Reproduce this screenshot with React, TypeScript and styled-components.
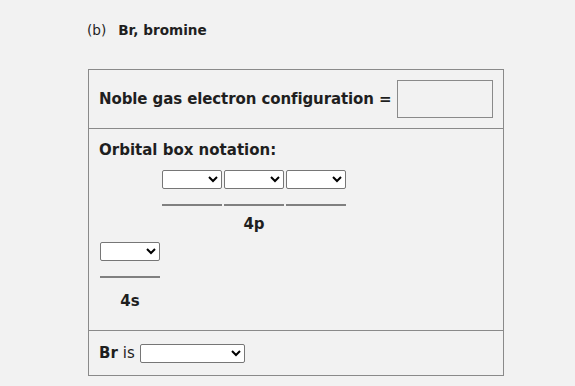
import React from "react";
import styled, { createGlobalStyle } from "styled-components";

const Global = createGlobalStyle`
  html, body { margin: 0; padding: 0; background: #f2f2f2; }
  body { font-family: "DejaVu Sans", Verdana, sans-serif; color: #1f1f1f; }
`;

const Page = styled.div`
  padding: 21px 0 0 87px;
`;

const Heading = styled.div`
  font-size: 13.6px;
  line-height: 18px;
  display: flex;
  gap: 12px;
`;

const Bold = styled.span`
  font-weight: bold;
`;

const Card = styled.div`
  margin-top: 30px;
  margin-left: 1px;
  width: 414px;
  border: 1px solid #8a8a8a;
`;

const Row = styled.div<{ $h: number; $top?: boolean }>`
  height: ${(p) => p.$h}px;
  padding: 0 10px;
  border-top: ${(p) => (p.$top ? "1px solid #8a8a8a" : "none")};
  box-sizing: border-box;
`;

const InlineRow = styled(Row)`
  display: flex;
  align-items: center;
`;

const Label = styled.span<{ $tight?: boolean }>`
  font-size: 15px;
  font-weight: bold;
  white-space: nowrap;
  flex-shrink: 0;
  letter-spacing: ${(p) => (p.$tight ? "-0.1px" : "0")};
`;

const Plain = styled.span`
  font-size: 15px;
  margin: 0 5px 0 5px;
`;

const AnswerBox = styled.div`
  width: 94px;
  height: 36px;
  border: 1px solid #8a8a8a;
  margin-left: 6px;
  flex-shrink: 0;
`;

const NotationRow = styled(Row)`
  padding-top: 12px;
  display: flex;
  flex-direction: column;
`;

const Level = styled.div<{ $ml: number; $mt: number }>`
  margin-left: ${(p) => p.$ml}px;
  margin-top: ${(p) => p.$mt}px;
  display: flex;
  flex-direction: column;
  align-items: center;
  align-self: flex-start;
`;

const Boxes = styled.div`
  display: flex;
  gap: 2px;
`;

const Lines = styled.div`
  display: flex;
  gap: 2px;
  margin-top: 15px;
`;

const Line = styled.div`
  width: 60px;
  height: 2px;
  background: #808080;
`;

const Sub = styled.div<{ $mt: number }>`
  margin-top: ${(p) => p.$mt}px;
  font-size: 15px;
  font-weight: bold;
  line-height: 18px;
`;

const Select = styled.select<{ $w: number }>`
  width: ${(p) => p.$w}px;
  height: 19px;
  box-sizing: border-box;
  border: 1px solid #767676;
  border-radius: 2px;
  background: #fff;
  font-size: 12px;
  padding: 0;
  margin: 0;
`;

export default function App() {
  return (
    <>
      <Global />
      <Page>
        <Heading>
          <span>(b)</span>
          <Bold>Br, bromine</Bold>
        </Heading>
        <Card>
          <InlineRow $h={58}>
            <Label $tight>Noble gas electron configuration =</Label>
            <AnswerBox />
          </InlineRow>
          <NotationRow $h={202} $top>
            <Label>Orbital box notation:</Label>
            <Level $ml={63} $mt={11}>
              <Boxes>
                <Select $w={60}><option></option></Select>
                <Select $w={60}><option></option></Select>
                <Select $w={60}><option></option></Select>
              </Boxes>
              <Lines>
                <Line />
                <Line />
                <Line />
              </Lines>
              <Sub $mt={9}>4p</Sub>
            </Level>
            <Level $ml={1} $mt={9}>
              <Boxes>
                <Select $w={60}><option></option></Select>
              </Boxes>
              <Lines>
                <Line />
              </Lines>
              <Sub $mt={14}>4s</Sub>
            </Level>
          </NotationRow>
          <InlineRow $h={45} $top>
            <Label>Br</Label>
            <Plain>is</Plain>
            <Select $w={105}><option></option></Select>
          </InlineRow>
        </Card>
      </Page>
    </>
  );
}
